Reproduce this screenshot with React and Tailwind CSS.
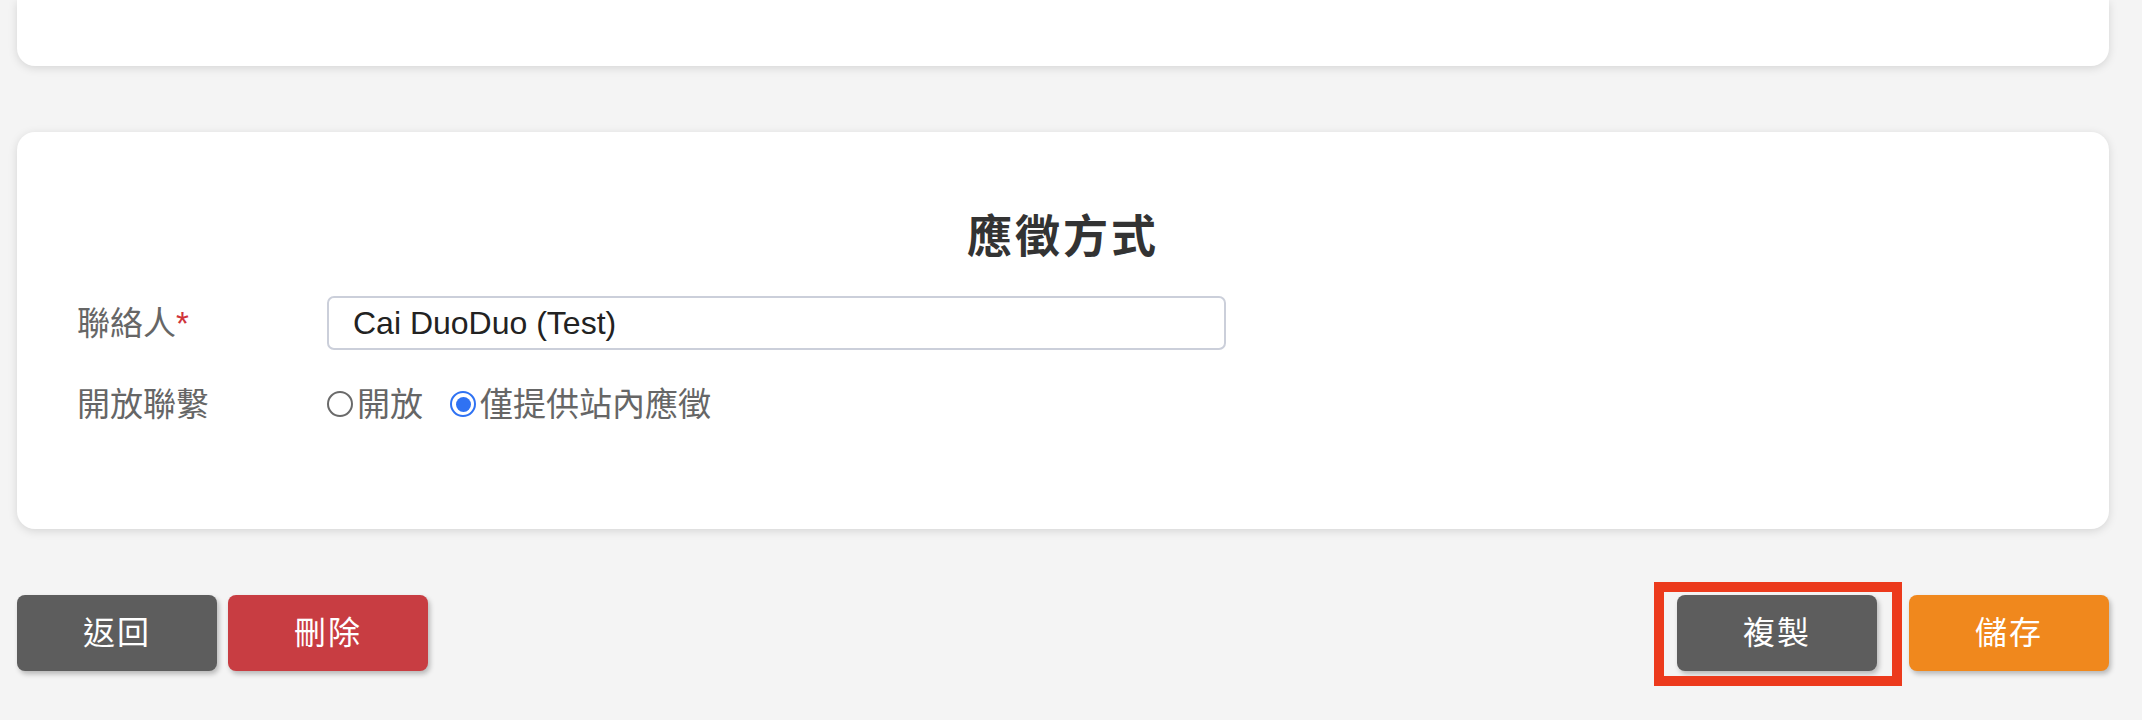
import React from 'react';

const FONT = {
  fontFamily: '"Liberation Sans", "Noto Sans CJK TC", sans-serif',
};

function Radio({ checked, label }) {
  return (
    <label className="flex items-center gap-[4px]">
      {checked ? (
        <span className="flex h-[26px] w-[26px] items-center justify-center rounded-full border-[2px] border-[#2f72f3] bg-white">
          <span className="h-[15px] w-[15px] rounded-full bg-[#2f72f3]" />
        </span>
      ) : (
        <span className="h-[26px] w-[26px] rounded-full border-[2px] border-[#6a6a6a] bg-white" />
      )}
      <span className="text-[33px] leading-none text-[#666]">{label}</span>
    </label>
  );
}

function ActionButton({ children, color }) {
  return (
    <button
      className={`flex h-[76px] w-[200px] items-center justify-center rounded-[8px] text-[32px] tracking-[2px] text-white shadow-[2px_3px_5px_rgba(0,0,0,0.25)] ${color}`}
    >
      {children}
    </button>
  );
}

export default function App() {
  return (
    <div className="min-h-[720px] bg-[#f4f4f4] pl-[17px] pr-[33px]" style={FONT}>
      {/* previous card, only its bottom is visible */}
      <div className="h-[66px] rounded-b-[18px] bg-white shadow-[0_2px_10px_rgba(0,0,0,0.13)]" />

      {/* 應徵方式 */}
      <div className="mt-[66px] h-[397px] rounded-[18px] bg-white px-[60px] pt-[82px] shadow-[0_2px_10px_rgba(0,0,0,0.13)]">
        <h2 className="h-[48px] text-center text-[45px] font-bold leading-[48px] tracking-[3px] text-[#333]">
          應徵方式
        </h2>

        <div className="mt-[34px] flex h-[54px] items-center">
          <div className="w-[250px] text-[33px] leading-none text-[#666]">
            聯絡人<span className="text-[#d0343a]">*</span>
          </div>
          <div className="flex h-[54px] w-[899px] items-center rounded-[7px] border-2 border-[#cbcfda] pl-[24px] text-[32px] text-[#222]">
            Cai DuoDuo (Test)
          </div>
        </div>

        <div className="mt-[36px] flex h-[36px] items-center">
          <div className="w-[250px] text-[33px] leading-none text-[#666]">開放聯繫</div>
          <div className="flex items-center gap-[27px]">
            <Radio label="開放" />
            <Radio checked label="僅提供站內應徵" />
          </div>
        </div>
      </div>

      {/* buttons */}
      <div className="mt-[66px] flex justify-between">
        <div className="flex gap-[11px]">
          <ActionButton color="bg-[#5d5d5d]">返回</ActionButton>
          <ActionButton color="bg-[#c83d42]">刪除</ActionButton>
        </div>
        <div className="flex gap-[32px]">
          <div className="relative">
            <ActionButton color="bg-[#5d5d5d]">複製</ActionButton>
            <span className="pointer-events-none absolute left-[-23px] top-[-13px] h-[104px] w-[248px] border-[10px] border-[#ec3a1c]" />
          </div>
          <ActionButton color="bg-[#f0881d]">儲存</ActionButton>
        </div>
      </div>
    </div>
  );
}
